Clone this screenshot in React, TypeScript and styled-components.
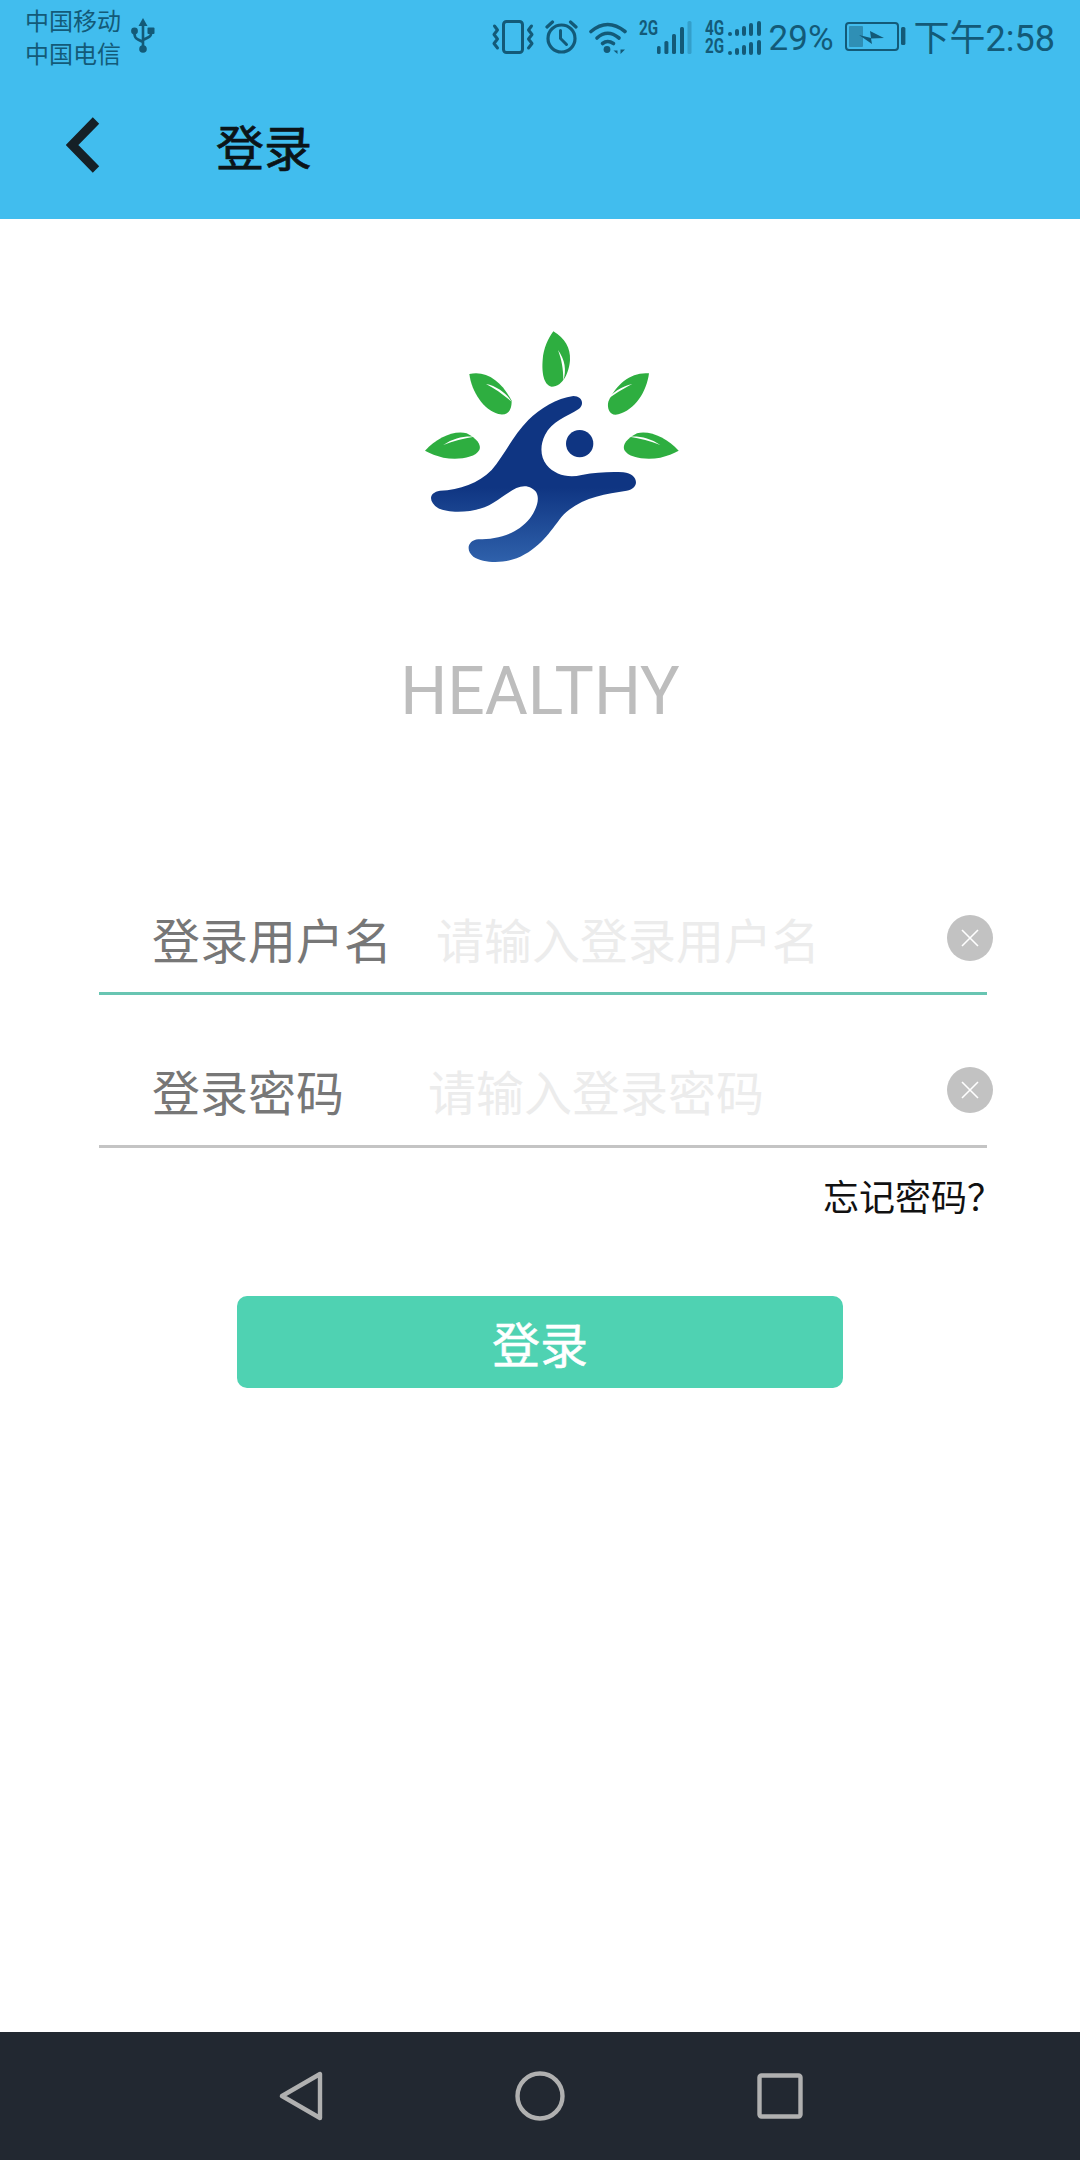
import React from 'react';
import styled, { createGlobalStyle } from 'styled-components';

const CJK = `"Noto Sans CJK SC", "Noto Sans", sans-serif`;

const UsbIcon = () => (
  <svg width="24" height="36" viewBox="0 0 24 36" fill="none">
    <path d="M12 0 L16.5 8 H7.5 Z" fill="#135a78" />
    <path d="M12 6 V31 M3.5 13 V16 Q3.5 20 7 21.5 L12 24 M20 13 V16 Q20 18 17 19.5 L12 22" stroke="#135a78" strokeWidth="2.6" />
    <circle cx="3.5" cy="13" r="3.4" fill="#135a78" />
    <rect x="16.5" y="9.5" width="7" height="6.5" rx="1" fill="#135a78" />
    <circle cx="12" cy="31" r="3.8" fill="#135a78" />
  </svg>
);

const VibrateIcon = () => (
  <svg width="42" height="34" viewBox="0 0 42 34" fill="none" stroke="#135a78" strokeWidth="3" strokeLinecap="round" strokeLinejoin="round">
    <rect x="11.5" y="1.5" width="19" height="31" rx="3" />
    <path d="M2.5 6 L5.5 10 L2 14.5 L5.5 19 L2 23.5 L5.5 28" />
    <path d="M39.5 6 L36.5 10 L40 14.5 L36.5 19 L40 23.5 L36.5 28" />
  </svg>
);

const AlarmIcon = () => (
  <svg width="33" height="34" viewBox="0 0 33 34" fill="none" stroke="#135a78" strokeWidth="3.2" strokeLinecap="round">
    <circle cx="16.5" cy="18.5" r="13.5" />
    <path d="M15.5 10.5 V18.5 L21.5 24.5" strokeWidth="3" />
    <path d="M2 7 L7.5 2 M31 7 L25.5 2" />
  </svg>
);

const WifiIcon = () => (
  <svg width="39" height="33" viewBox="0 0 39 33" fill="none" stroke="#135a78" strokeWidth="3.6" strokeLinecap="round">
    <path d="M2 10.5 Q18.5 -3.5 36 10.5" />
    <path d="M8 17 Q18.5 7.5 30 17" />
    <path d="M13.5 22.5 Q18.5 18.5 24.5 22.5" />
    <circle cx="18" cy="28.5" r="3.4" fill="#135a78" stroke="none" />
    <path d="M28.5 24 V33 L24.5 29.5 H28.5 Z M31.5 24 V33 L36 28.5 H31.5 Z" fill="#135a78" stroke="none" />
  </svg>
);

const SignalBars = () => (
  <svg width="35" height="34" viewBox="0 0 35 34">
    <rect x="0" y="26" width="3.6" height="8" rx="1.6" fill="#135a78" />
    <rect x="7.4" y="21" width="4" height="13" rx="1.6" fill="#135a78" />
    <rect x="15" y="14" width="4" height="20" rx="1.6" fill="#135a78" />
    <rect x="23" y="7" width="4" height="27" rx="1.6" fill="#135a78" />
    <rect x="30.5" y="1" width="4" height="33" rx="1.6" fill="#135a78" opacity="0.3" />
  </svg>
);

const BatteryIcon = () => (
  <svg width="61" height="30" viewBox="0 0 61 30" fill="none">
    <rect x="1" y="1" width="52" height="27" rx="3" stroke="#135a78" strokeWidth="2" />
    <rect x="4" y="4" width="14" height="21" rx="1" fill="#2f8fb5" />
    <path d="M14 13 L26 16 L25 9 L39 16 L26 16.5 L27 22 Z" fill="#135a78" />
    <rect x="56" y="5" width="4.4" height="18" rx="1.5" fill="#135a78" />
  </svg>
);

const Logo = () => (
  <svg width="300" height="270" viewBox="0 0 900 810">
    <defs>
      <linearGradient id="body" x1="0" y1="0" x2="0" y2="1">
        <stop offset="0.55" stopColor="#0f3582" />
        <stop offset="1" stopColor="#2f61ab" />
      </linearGradient>
    </defs>
    <g fill="#2eae40">
      <path d="M460 64 C495 85 512 115 510 150 C508 185 490 230 455 230 C430 225 425 185 428 150 C430 115 445 85 460 64 Z" />
      <path d="M208 192 C260 180 305 215 335 272 C335 300 325 318 295 312 C250 300 215 245 208 192 Z" />
      <path d="M747 190 C740 245 705 300 655 313 C630 320 620 295 625 275 C650 220 695 185 747 190 Z" />
      <path d="M75 422 C110 385 160 360 200 370 C230 385 245 405 238 420 C225 445 170 450 130 443 C110 438 90 430 75 422 Z" />
      <path d="M836 422 C801 385 751 360 711 370 C681 385 666 405 673 420 C686 445 741 450 781 443 C801 438 821 430 836 422 Z" />
    </g>
    <g fill="#fff">
      <path d="M474 120 C495 150 500 180 490 212 C490 175 485 150 474 120 Z" />
      <path d="M258 222 C290 228 320 250 335 275 C310 255 285 235 258 222 Z" />
      <path d="M697 222 C665 228 635 250 617 272 C640 255 670 235 697 222 Z" />
      <path d="M130 405 C160 385 190 378 222 380 C190 385 160 392 130 405 Z" />
      <path d="M781 405 C751 385 721 378 689 380 C721 385 751 392 781 405 Z" />
    </g>
    <circle cx="539" cy="401" r="41" fill="#0f3582" />
    <path
      fill="url(#body)"
      d="M520 258 C545 258 556 282 535 298 C500 320 455 335 435 375 C420 405 420 440 440 465 C465 495 505 505 545 495 C590 487 630 485 670 487 C715 490 722 535 680 542 C610 552 535 565 485 620 C450 665 420 715 350 745 C310 760 250 760 220 740 C195 720 205 690 235 688 C290 688 350 675 390 625 C415 590 425 550 395 535 C360 515 325 550 280 578 C230 610 150 612 115 595 C85 575 85 548 120 542 C180 540 235 520 275 480 C310 440 340 375 385 330 C420 295 470 265 520 258 Z"
    />
  </svg>
);

const App: React.FC = () => {
  return (
    <Page>
      <GlobalStyle />
      <Header>
        <StatusBar>
          <Carrier>
            <Carriers>
              <span>中国移动</span>
              <span>中国电信</span>
            </Carriers>
            <UsbIcon />
          </Carrier>
          <StatusIcons>
            <VibrateIcon />
            <AlarmIcon />
            <WifiIcon />
            <Signal>
              <SimTag>2G</SimTag>
              <SignalBars />
            </Signal>
            <DualSignal>
              {['4G', '2G'].map((tag) => (
                <DualRow key={tag}>
                  <SimTag>{tag}</SimTag>
                  <MiniBars>
                    <MiniBar $h={4} />
                    <MiniBar $h={7} />
                    <MiniBar $h={10} />
                    <MiniBar $h={13} />
                    <MiniBar $h={15} />
                  </MiniBars>
                </DualRow>
              ))}
            </DualSignal>
            <Percent>29%</Percent>
            <BatteryIcon />
            <Clock>下午2:58</Clock>
          </StatusIcons>
        </StatusBar>
        <Toolbar>
          <BackButton>
            <svg width="34" height="56" viewBox="0 0 34 56" fill="none">
              <path d="M30 3.5 L6 28 L30 52.5" stroke="#152026" strokeWidth="9" />
            </svg>
          </BackButton>
          <Title>登录</Title>
        </Toolbar>
      </Header>

      <Brand>
        <LogoWrap>
          <Logo />
        </LogoWrap>
        <BrandName>HEALTHY</BrandName>
      </Brand>

      <Form>
        <Field $active>
          <Label $width={284}>登录用户名</Label>
          <Placeholder>请输入登录用户名</Placeholder>
          <ClearButton>
            <svg width="20" height="20" viewBox="0 0 20 20" stroke="#fff" strokeWidth="1.6">
              <path d="M2 2 L18 18 M18 2 L2 18" />
            </svg>
          </ClearButton>
        </Field>
        <Field>
          <Label $width={276}>登录密码</Label>
          <Placeholder>请输入登录密码</Placeholder>
          <ClearButton>
            <svg width="20" height="20" viewBox="0 0 20 20" stroke="#fff" strokeWidth="1.6">
              <path d="M2 2 L18 18 M18 2 L2 18" />
            </svg>
          </ClearButton>
        </Field>
        <Forgot>忘记密码？</Forgot>
      </Form>

      <SubmitButton>登录</SubmitButton>

      <NavBar>
        <svg width="44" height="50" viewBox="0 0 44 50" fill="none" stroke="#b0b0b0" strokeWidth="4.4" strokeLinejoin="round">
          <path d="M41 3 V47 L3 25 Z" />
        </svg>
        <svg width="50" height="50" viewBox="0 0 50 50" fill="none" stroke="#b0b0b0" strokeWidth="4.4">
          <circle cx="25" cy="25" r="22.5" />
        </svg>
        <svg width="46" height="46" viewBox="0 0 46 46" fill="none" stroke="#b0b0b0" strokeWidth="4.4" strokeLinejoin="round">
          <rect x="2.5" y="2.5" width="41" height="41" rx="2" />
        </svg>
      </NavBar>
    </Page>
  );
};

export default App;

// Styled Components
const GlobalStyle = createGlobalStyle`
  html, body {
    margin: 0;
    padding: 0;
    background: #fff;
  }
  * {
    box-sizing: border-box;
  }
`;

const Page = styled.div`
  width: 1080px;
  height: 2160px;
  display: flex;
  flex-direction: column;
  background: #fff;
  font-family: ${CJK};
`;

const Header = styled.header`
  height: 219px;
  background: #41bdee;
  display: flex;
  flex-direction: column;
`;

const StatusBar = styled.div`
  height: 70px;
  display: flex;
  align-items: flex-start;
  justify-content: space-between;
  padding: 0 25px 0 25px;
  color: #135a78;
`;

const Carrier = styled.div`
  display: flex;
  align-items: center;
  gap: 10px;
  padding-top: 3px;
`;

const Carriers = styled.div`
  display: flex;
  flex-direction: column;
  font-size: 24px;
  line-height: 33px;
`;

const StatusIcons = styled.div`
  display: flex;
  align-items: center;
  height: 74px;
  gap: 11px;
`;

const Signal = styled.div`
  display: flex;
  align-items: flex-start;
`;

const SimTag = styled.span`
  font-family: Roboto, sans-serif;
  font-size: 16px;
  line-height: 16px;
  font-weight: 700;
  color: #135a78;
  display: block;
  width: 18px;
  white-space: nowrap;
  transform: scale(0.95, 1.3);
  transform-origin: left center;
`;

const DualSignal = styled.div`
  display: flex;
  flex-direction: column;
  gap: 3px;
  margin-left: 2px;
`;

const DualRow = styled.div`
  display: flex;
  align-items: flex-end;
  gap: 5px;
  height: 16px;
`;

const MiniBars = styled.div`
  display: flex;
  align-items: flex-end;
  gap: 3.2px;
`;

const MiniBar = styled.i<{ $h: number }>`
  display: block;
  width: 4px;
  height: ${(p) => p.$h}px;
  background: #135a78;
  border-radius: 2px;
`;

const Percent = styled.span`
  font-family: Roboto, sans-serif;
  font-size: 35px;
  line-height: 40px;
  margin-left: -3px;
  padding-top: 4px;
`;

const Clock = styled.span`
  font-size: 36px;
  line-height: 40px;
  font-family: Roboto, ${CJK};
  margin-left: -3px;
  padding-top: 4px;
`;

const Toolbar = styled.div`
  flex: 1;
  display: flex;
  align-items: center;
  padding: 0 0 0 66px;
`;

const BackButton = styled.div`
  width: 150px;
  display: flex;
`;

const Title = styled.h1`
  margin: 0;
  font-size: 48px;
  font-weight: 400;
  color: #0b1418;
  -webkit-text-stroke: 0.7px #0b1418;
`;

const Brand = styled.section`
  display: flex;
  flex-direction: column;
  align-items: center;
  padding-top: 91px;
`;

const LogoWrap = styled.div`
  display: flex;
  margin-left: 20px;
`;

const BrandName = styled.div`
  font-family: Roboto, sans-serif;
  font-weight: 400;
  font-size: 66px;
  line-height: 78px;
  color: #bdbdbd;
  margin-top: 73px;
`;

const Form = styled.section`
  display: flex;
  flex-direction: column;
  margin: 120px 93px 0 99px;
`;

const Field = styled.div<{ $active?: boolean }>`
  height: 153px;
  display: flex;
  align-items: center;
  padding: 39px 0 0 53px;
  border-bottom: 3px solid ${(p) => (p.$active ? '#68c5b2' : '#c4c4c4')};
  font-size: 48px;
  line-height: 60px;
  &:first-child {
    height: 144px;
    padding-top: 32px;
  }
`;

const Label = styled.span<{ $width: number }>`
  width: ${(p) => p.$width}px;
  color: #777;
  flex: none;
`;

const Placeholder = styled.span`
  color: #ececec;
  flex: 1;
  white-space: nowrap;
`;

const ClearButton = styled.div`
  width: 46px;
  height: 46px;
  border-radius: 50%;
  background: #c2c2c2;
  display: flex;
  align-items: center;
  justify-content: center;
  flex: none;
  margin-right: -6px;
`;

const Forgot = styled.div`
  align-self: flex-end;
  font-size: 36px;
  line-height: 52px;
  color: #111;
  margin-top: 21px;
  margin-right: -16px;
`;

const SubmitButton = styled.button`
  width: 606px;
  height: 92px;
  margin: 75px auto 0;
  border: 0;
  border-radius: 10px;
  background: #4fd2b2;
  color: #fff;
  font-family: ${CJK};
  font-size: 48px;
  padding: 0;
  -webkit-text-stroke: 0.5px #fff;
`;

const NavBar = styled.nav`
  margin-top: auto;
  height: 128px;
  background: #222831;
  display: flex;
  align-items: center;
  padding: 0 277px 0 279px;
  justify-content: space-between;
`;
